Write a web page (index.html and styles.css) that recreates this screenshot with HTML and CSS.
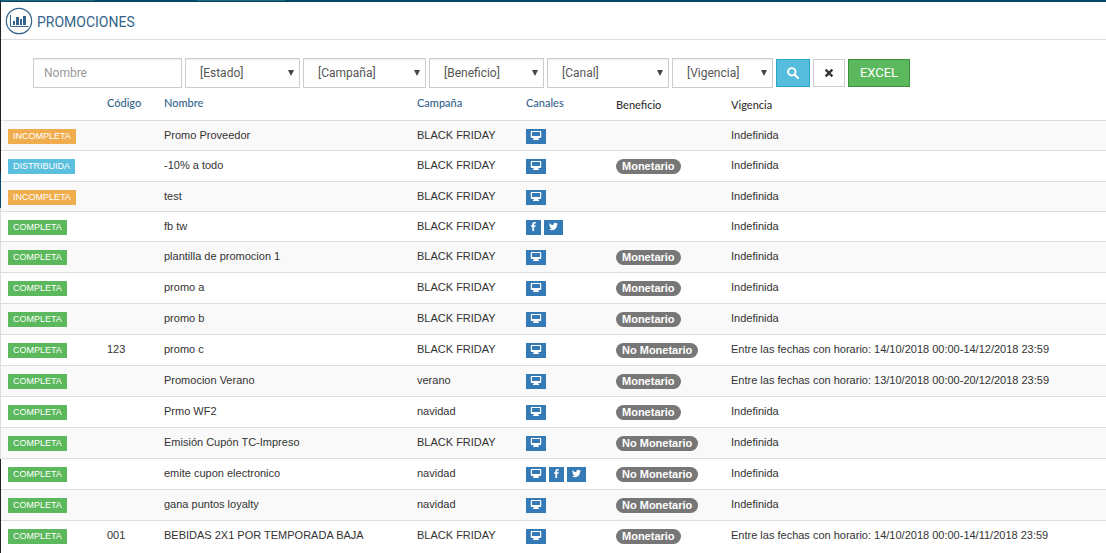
FILE: index.html
```
<!DOCTYPE html>
<html lang="es">
<head>
<meta charset="utf-8">
<title>Promociones</title>
<link rel="stylesheet" href="styles.css">
</head>
<body>
<svg class="sprite" aria-hidden="true">
  <symbol id="i-desktop" viewBox="0 0 12 9"><path fill="currentColor" fill-rule="evenodd" d="M1.500 0h9a.7.7 0 0 1 .7.7v5.600a.7.7 0 0 1-.7.7H8.300v1H9v1H3V8h.7V7H1.500a.7.7 0 0 1-.7-.7V.7a.7.7 0 0 1 .7-.7zM2 1v4h8V1z"/></symbol>
  <symbol id="i-facebook" viewBox="0 0 6 10"><path fill="currentColor" d="M5.500.1v1.600h-.9c-.7 0-.9.4-.9.900v1.100h1.700l-.2 1.700H3.700V10H1.700V5.400H.3V3.700h1.400V2.400C1.700.9 2.700 0 4.200 0c.6 0 1.100 0 1.300.1z"/></symbol>
  <symbol id="i-twitter" viewBox="0 0 24 24"><path fill="currentColor" d="M24 4.600a10 10 0 0 1-2.800.8 5 5 0 0 0 2.100-2.700 10 10 0 0 1-3.100 1.200 4.900 4.900 0 0 0-8.400 4.500A14 14 0 0 1 1.700 3.200a4.900 4.900 0 0 0 1.500 6.500 5 5 0 0 1-2.200-.6 4.900 4.900 0 0 0 3.900 4.900 5 5 0 0 1-2.200.1 4.900 4.900 0 0 0 4.600 3.400A9.900 9.900 0 0 1 0 19.500 14 14 0 0 0 21.500 7.100 10 10 0 0 0 24 4.600z"/></symbol>
</svg>
<div class="topbar"><span></span><span></span></div>
<div class="shell">
  <div class="rail"><span class="rail-dark"></span><span class="rail-active"></span><span class="rail-light"></span><span class="rail-end"></span></div>
  <main>
    <header class="page-head">
      <svg class="logo" viewBox="0 0 28 28" aria-hidden="true">
        <circle cx="14" cy="14" r="12.700" fill="#fff" stroke="#34648c" stroke-width="1.200"/>
        <path d="M5.500 8v11.500h18" fill="none" stroke="#34648c"/>
        <path d="M8 14h2v4H8zM11 10h3v8h-3zM15 12h2v6h-2zM18 9h3v9h-3z" fill="#34648c"/>
      </svg>
      <h1>PROMOCIONES</h1>
    </header>
    <form class="filters">
      <input class="field name" type="text" placeholder="Nombre" aria-label="Nombre">
      <div class="pick w-estado"><select class="field" aria-label="Estado"><option>[Estado]</option></select></div>
      <div class="pick w-campana"><select class="field" aria-label="Campaña"><option>[Campaña]</option></select></div>
      <div class="pick w-estado"><select class="field" aria-label="Beneficio"><option>[Beneficio]</option></select></div>
      <div class="pick w-canal"><select class="field" aria-label="Canal"><option>[Canal]</option></select></div>
      <div class="pick w-vigencia"><select class="field" aria-label="Vigencia"><option>[Vigencia]</option></select></div>
      <button class="btn search" type="button" aria-label="Buscar"><svg viewBox="0 0 12 12"><circle cx="4.800" cy="4.800" r="3.700" fill="none" stroke="currentColor" stroke-width="1.900"/><path d="M7.500 7.500l3.500 3.500" stroke="currentColor" stroke-width="2.200" stroke-linecap="round"/></svg></button>
      <button class="btn clear" type="button" aria-label="Limpiar"><svg viewBox="0 0 12 12"><path d="M3.500 3.500l5 5M8.500 3.500l-5 5" stroke="currentColor" stroke-width="2.400" stroke-linecap="square"/></svg></button>
      <button class="btn excel" type="button">EXCEL</button>
    </form>
    <table>
      <colgroup><col class="c-state"><col class="c-code"><col class="c-name"><col class="c-camp"><col class="c-chan"><col class="c-ben"><col></colgroup>
      <thead>
        <tr><th></th><th><a href="#">Código</a></th><th><a href="#">Nombre</a></th><th><a href="#">Campaña</a></th><th><a href="#">Canales</a></th><th class="plain">Beneficio</th><th class="plain">Vigencia</th></tr>
      </thead>
      <tbody>
        <tr><td><span class="tag warn">INCOMPLETA</span></td><td></td><td>Promo Proveedor</td><td>BLACK FRIDAY</td><td><span class="chan"><svg class="desk"><use href="#i-desktop"/></svg></span></td><td></td><td>Indefinida</td></tr>
        <tr><td><span class="tag info">DISTRIBUIDA</span></td><td></td><td>-10% a todo</td><td>BLACK FRIDAY</td><td><span class="chan"><svg class="desk"><use href="#i-desktop"/></svg></span></td><td><span class="badge">Monetario</span></td><td>Indefinida</td></tr>
        <tr><td><span class="tag warn">INCOMPLETA</span></td><td></td><td>test</td><td>BLACK FRIDAY</td><td><span class="chan"><svg class="desk"><use href="#i-desktop"/></svg></span></td><td></td><td>Indefinida</td></tr>
        <tr><td><span class="tag ok">COMPLETA</span></td><td></td><td>fb tw</td><td>BLACK FRIDAY</td><td><span class="chan"><svg class="fb"><use href="#i-facebook"/></svg></span><span class="chan"><svg class="tw"><use href="#i-twitter"/></svg></span></td><td></td><td>Indefinida</td></tr>
        <tr><td><span class="tag ok">COMPLETA</span></td><td></td><td>plantilla de promocion 1</td><td>BLACK FRIDAY</td><td><span class="chan"><svg class="desk"><use href="#i-desktop"/></svg></span></td><td><span class="badge">Monetario</span></td><td>Indefinida</td></tr>
        <tr><td><span class="tag ok">COMPLETA</span></td><td></td><td>promo a</td><td>BLACK FRIDAY</td><td><span class="chan"><svg class="desk"><use href="#i-desktop"/></svg></span></td><td><span class="badge">Monetario</span></td><td>Indefinida</td></tr>
        <tr><td><span class="tag ok">COMPLETA</span></td><td></td><td>promo b</td><td>BLACK FRIDAY</td><td><span class="chan"><svg class="desk"><use href="#i-desktop"/></svg></span></td><td><span class="badge">Monetario</span></td><td>Indefinida</td></tr>
        <tr><td><span class="tag ok">COMPLETA</span></td><td>123</td><td>promo c</td><td>BLACK FRIDAY</td><td><span class="chan"><svg class="desk"><use href="#i-desktop"/></svg></span></td><td><span class="badge">No Monetario</span></td><td>Entre las fechas con horario: 14/10/2018 00:00-14/12/2018 23:59</td></tr>
        <tr><td><span class="tag ok">COMPLETA</span></td><td></td><td>Promocion Verano</td><td>verano</td><td><span class="chan"><svg class="desk"><use href="#i-desktop"/></svg></span></td><td><span class="badge">Monetario</span></td><td>Entre las fechas con horario: 13/10/2018 00:00-20/12/2018 23:59</td></tr>
        <tr><td><span class="tag ok">COMPLETA</span></td><td></td><td>Prmo WF2</td><td>navidad</td><td><span class="chan"><svg class="desk"><use href="#i-desktop"/></svg></span></td><td><span class="badge">Monetario</span></td><td>Indefinida</td></tr>
        <tr><td><span class="tag ok">COMPLETA</span></td><td></td><td>Emisión Cupón TC-Impreso</td><td>BLACK FRIDAY</td><td><span class="chan"><svg class="desk"><use href="#i-desktop"/></svg></span></td><td><span class="badge">No Monetario</span></td><td>Indefinida</td></tr>
        <tr><td><span class="tag ok">COMPLETA</span></td><td></td><td>emite cupon electronico</td><td>navidad</td><td><span class="chan"><svg class="desk"><use href="#i-desktop"/></svg></span><span class="chan"><svg class="fb"><use href="#i-facebook"/></svg></span><span class="chan"><svg class="tw"><use href="#i-twitter"/></svg></span></td><td><span class="badge">No Monetario</span></td><td>Indefinida</td></tr>
        <tr><td><span class="tag ok">COMPLETA</span></td><td></td><td>gana puntos loyalty</td><td>navidad</td><td><span class="chan"><svg class="desk"><use href="#i-desktop"/></svg></span></td><td><span class="badge">No Monetario</span></td><td>Indefinida</td></tr>
        <tr><td><span class="tag ok">COMPLETA</span></td><td>001</td><td>BEBIDAS 2X1 POR TEMPORADA BAJA</td><td>BLACK FRIDAY</td><td><span class="chan"><svg class="desk"><use href="#i-desktop"/></svg></span></td><td><span class="badge">Monetario</span></td><td>Entre las fechas con horario: 14/10/2018 00:00-14/11/2018 23:59</td></tr>
      </tbody>
    </table>
  </main>
</div>
</body>
</html>
```

FILE: styles.css
```
* { box-sizing: border-box; }
body { margin: 0; min-height: 100vh; display: flex; flex-direction: column; background: #fff; color: #333; font: 11px/14px "Liberation Sans", Arial, sans-serif; }
.sprite { display: none; }

.topbar { height: 2px; background: #00476a; display: flex; gap: 102px; padding-left: 1px; }
.topbar span { width: 94px; height: 1px; background: #236478; }
.topbar span:last-child { width: 88px; }

.shell { flex: 1; display: grid; grid-template-columns: 1px 1fr; }
.rail { display: flex; flex-direction: column; background: #222; }
.rail-dark { height: 171px; }
.rail-active { height: 35px; background: #00476a; }
.rail-light { height: 251px; background: #ddd; }
.rail-end { flex: 1; }
main { min-width: 0; }

.page-head { display: flex; align-items: center; gap: 4px; height: 38px; padding-left: 4px; border-bottom: 1px solid #ddd; }
.logo { width: 28px; height: 28px; }
h1 { margin: 0; font: 400 14px/20px Roboto, sans-serif; color: #34648c; padding-top: 2px; }

.filters { display: flex; align-items: center; gap: 3px; padding: 18px 32px 0; }
.field { height: 30px; border: 1px solid #ccc; border-radius: 0; background: #fff; color: #555; font: 12px/20px Roboto, sans-serif; box-shadow: inset 0 1px 1px rgba(0, 0, 0, .075); }
.name { width: 149px; padding: 0 10px; }
.name::placeholder { color: #999; }
.pick { position: relative; }
.pick select { appearance: none; width: 100%; padding: 0 14px; display: block; }
.pick::after { content: ""; position: absolute; right: 6px; top: 12px; border: 3px solid transparent; border-top: 6px solid #444; border-bottom: 0; pointer-events: none; }
.w-estado { width: 115px; }
.w-campana { width: 123px; }
.w-canal { width: 122px; }
.w-vigencia { width: 101px; }
.btn { height: 28px; padding: 0; border: 1px solid #ccc; background: #fff; color: #333; display: flex; align-items: center; justify-content: center; font: 12px/16px Roboto, sans-serif; }
.btn svg { width: 12px; height: 12px; }
.search { width: 34px; background: #56bddd; border-color: #28a4c9; color: #fff; }
.clear { width: 32px; }
.excel { width: 62px; background: #5cb85c; border-color: #3e8f3e; color: #fff; font-size: 13px; }

table { width: 100%; table-layout: fixed; border-collapse: separate; border-spacing: 0; }
.c-state { width: 98px; }
.c-code { width: 57px; }
.c-name { width: 253px; }
.c-camp { width: 109px; }
.c-chan { width: 90px; }
.c-ben { width: 115px; }
th { height: 32px; padding: 8px 8px 10px; text-align: left; vertical-align: top; font: 500 11px/14px Lato, sans-serif; }
th.plain { padding: 10px 8px 8px; }
th a { color: #34648c; text-decoration: none; }
td { height: 30px; padding: 7px 8px 6px; border-top: 1px solid #ddd; vertical-align: top; white-space: nowrap; }
tr:has(.badge) td { height: 31px; padding-bottom: 7px; }
td:first-child, th:first-child { padding-left: 7px; }
tbody tr:nth-child(odd) { background: #f9f9f9; }
.tag, .chan { display: flex; align-items: center; height: 15px; color: #fff; }
.tag { width: max-content; padding: 0 5px 1px; margin-top: 1px; font-size: 9px; line-height: 14px; }
.warn { background: #f0ad4e; }
.info { background: #5bc0de; }
.ok { background: #5cb85c; }
.chan { display: inline-flex; vertical-align: top; margin: 1px 3px 0 0; padding: 0 4px 2px; background: #337ab7; }
.chan:last-child { margin-right: 0; }
.desk { width: 12px; height: 9px; }
.fb { width: 7px; height: 9px; }
.tw { width: 11px; height: 9px; }
.badge { display: block; width: max-content; margin-top: 1px; padding: 0 6px; border-radius: 8px; background: #777; color: #fff; font-weight: 700; line-height: 15px; }
```
